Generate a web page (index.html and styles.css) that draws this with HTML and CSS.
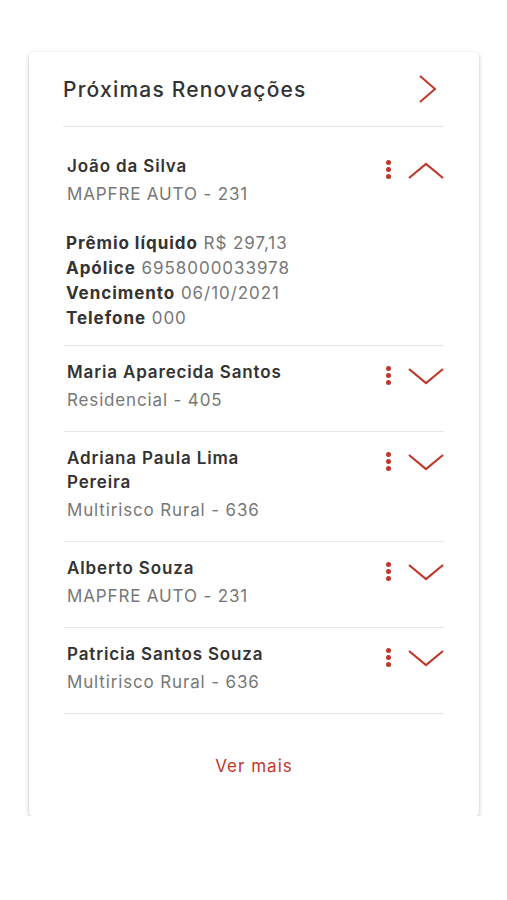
FILE: index.html
```html
<!DOCTYPE html>
<html lang="pt-BR">
<head>
    <meta charset="UTF-8">
    <meta name="viewport" content="width=device-width, initial-scale=1.0">
    <title>Próximas Renovações</title>
    <link rel="stylesheet" href="styles.css">
</head>
<body>
    <section class="card">
        <header class="card-header">
            <h2>Próximas Renovações</h2>
            <svg class="icon-next" width="24" height="30" viewBox="0 0 24 30">
                <path d="M4 2 L19 15 L4 28" fill="none" stroke="#c2372b" stroke-width="2"/>
            </svg>
        </header>

        <ul class="renewals">
            <li class="renewal open">
                <div class="renewal-row">
                    <div class="renewal-info">
                        <div class="name">João da Silva</div>
                        <div class="product">MAPFRE AUTO - 231</div>
                    </div>
                    <div class="actions">
                        <span class="dots"><i></i><i></i><i></i></span>
                        <svg class="chevron" width="36" height="17" viewBox="0 0 36 17">
                            <path d="M1 16 L18 2 L35 16" fill="none" stroke="#c2372b" stroke-width="2.2"/>
                        </svg>
                    </div>
                </div>
                <dl class="details">
                    <div><dt>Prêmio líquido</dt> <dd>R$ 297,13</dd></div>
                    <div><dt>Apólice</dt> <dd>6958000033978</dd></div>
                    <div><dt>Vencimento</dt> <dd>06/10/2021</dd></div>
                    <div><dt>Telefone</dt> <dd>000</dd></div>
                </dl>
            </li>
            <li class="renewal">
                <div class="renewal-row">
                    <div class="renewal-info">
                        <div class="name">Maria Aparecida Santos</div>
                        <div class="product">Residencial - 405</div>
                    </div>
                    <div class="actions">
                        <span class="dots"><i></i><i></i><i></i></span>
                        <svg class="chevron" width="36" height="17" viewBox="0 0 36 17">
                            <path d="M1 1 L18 15 L35 1" fill="none" stroke="#c2372b" stroke-width="2.2"/>
                        </svg>
                    </div>
                </div>
            </li>
            <li class="renewal">
                <div class="renewal-row">
                    <div class="renewal-info">
                        <div class="name">Adriana Paula Lima Pereira</div>
                        <div class="product">Multirisco Rural - 636</div>
                    </div>
                    <div class="actions">
                        <span class="dots"><i></i><i></i><i></i></span>
                        <svg class="chevron" width="36" height="17" viewBox="0 0 36 17">
                            <path d="M1 1 L18 15 L35 1" fill="none" stroke="#c2372b" stroke-width="2.2"/>
                        </svg>
                    </div>
                </div>
            </li>
            <li class="renewal">
                <div class="renewal-row">
                    <div class="renewal-info">
                        <div class="name">Alberto Souza</div>
                        <div class="product">MAPFRE AUTO - 231</div>
                    </div>
                    <div class="actions">
                        <span class="dots"><i></i><i></i><i></i></span>
                        <svg class="chevron" width="36" height="17" viewBox="0 0 36 17">
                            <path d="M1 1 L18 15 L35 1" fill="none" stroke="#c2372b" stroke-width="2.2"/>
                        </svg>
                    </div>
                </div>
            </li>
            <li class="renewal">
                <div class="renewal-row">
                    <div class="renewal-info">
                        <div class="name">Patricia Santos Souza</div>
                        <div class="product">Multirisco Rural - 636</div>
                    </div>
                    <div class="actions">
                        <span class="dots"><i></i><i></i><i></i></span>
                        <svg class="chevron" width="36" height="17" viewBox="0 0 36 17">
                            <path d="M1 1 L18 15 L35 1" fill="none" stroke="#c2372b" stroke-width="2.2"/>
                        </svg>
                    </div>
                </div>
            </li>
        </ul>

        <footer class="card-footer">
            <a href="#" class="see-more">Ver mais</a>
        </footer>
    </section>
</body>
</html>
```

FILE: styles.css
```css
body {
    font-family: Inter, 'Noto Sans', sans-serif;
    margin: 0;
    padding: 0;
    background: #fff;
    color: #333;
}

.card {
    width: 450px;
    margin: 52px 0 0 29px;
    background: #fff;
    border-radius: 4px;
    box-shadow: 0 2px 4px rgba(0, 0, 0, 0.24), 0 0 2px rgba(0, 0, 0, 0.06);
}

.card-header {
    height: 74px;
    margin: 0 35px 0 34px;
    border-bottom: 1px solid #e6e6e6;
    display: flex;
    justify-content: space-between;
    align-items: center;
}

.card-header h2 {
    margin: 0;
    font-size: 21px;
    font-weight: 500;
    letter-spacing: 1.2px;
    color: #333;
}

.icon-next {
    margin-right: 4px;
}

.renewals {
    list-style: none;
    margin: 0 35px 0 35px;
    padding: 0;
}

.renewal {
    padding: 14px 0 19px 3px;
    border-bottom: 1px solid #e6e6e6;
}

.renewal.open {
    padding-top: 27px;
    padding-bottom: 14px;
}

.renewal-row {
    display: flex;
    justify-content: space-between;
    align-items: flex-start;
}

.name {
    max-width: 232px;
    font-size: 17px;
    line-height: 24px;
    font-weight: 600;
    letter-spacing: 0.85px;
    color: #333;
}

.product {
    margin-top: 4px;
    font-size: 17px;
    line-height: 24px;
    letter-spacing: 0.85px;
    color: #777;
}

.actions {
    display: flex;
    align-items: center;
    padding-top: 5px;
}

.dots {
    display: flex;
    flex-direction: column;
    gap: 2px;
    margin-right: 17px;
}

.dots i {
    display: block;
    width: 5px;
    height: 5px;
    border-radius: 50%;
    background: #c2372b;
}

.chevron {
    margin-top: 3px;
}

.details {
    margin: 25px 0 0 -1px;
}

.details div {
    font-size: 17px;
    line-height: 25px;
    letter-spacing: 0.95px;
}

.details dt,
.details dd {
    display: inline;
    margin: 0;
}

.details dt {
    font-weight: 700;
    color: #333;
}

.details dd {
    color: #777;
}

.card-footer {
    padding: 40px 0 38px;
    text-align: center;
}

.see-more {
    font-size: 17px;
    line-height: 24px;
    letter-spacing: 1px;
    color: #c2372b;
    text-decoration: none;
}
```
